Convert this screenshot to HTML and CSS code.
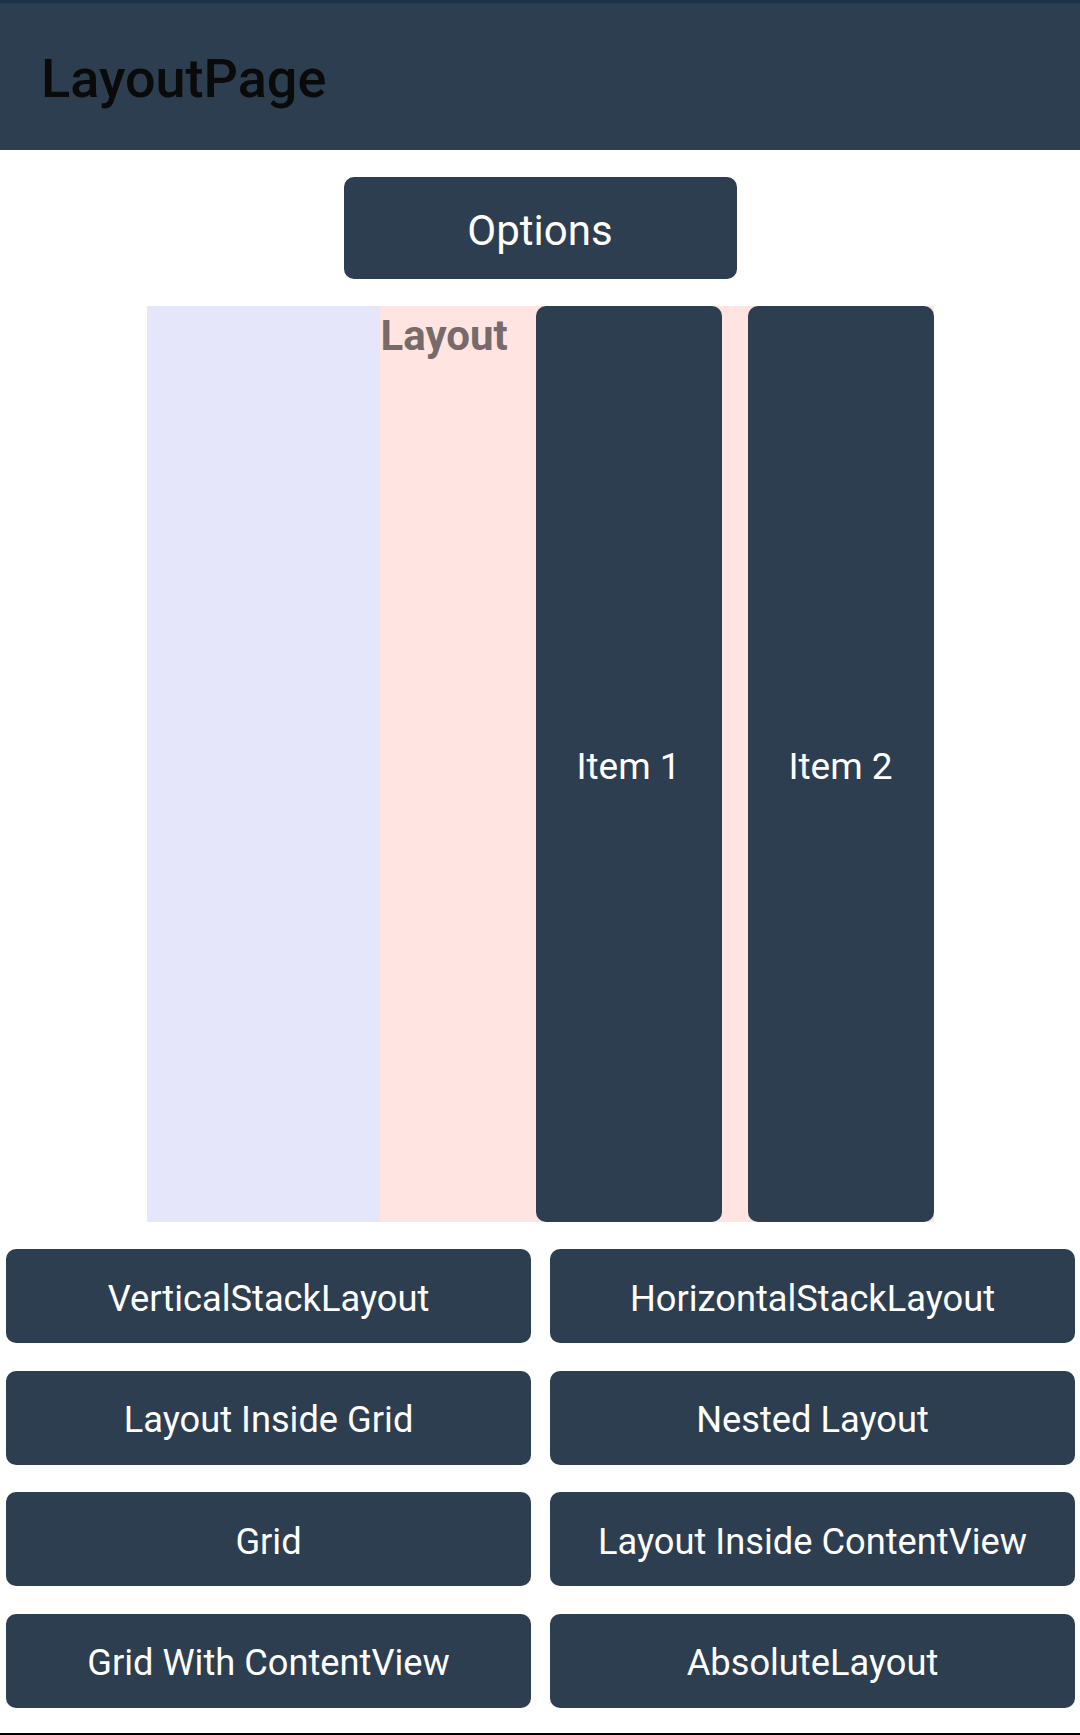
FILE: index.html
```html
<!DOCTYPE html>
<html lang="en">
<head>
  <meta charset="UTF-8" />
  <title>LayoutPage</title>
  <link rel="stylesheet" href="styles.css">
</head>
<body>

  <header class="top-bar">
    <h1 class="page-title">LayoutPage</h1>
  </header>

  <main class="content">

    <button class="options-button">Options</button>

    <div class="layout-demo">
      <div class="column-side"></div>
      <div class="column-main">
        <span class="layout-label">Layout</span>
        <div class="item-box">Item 1</div>
        <div class="item-box">Item 2</div>
      </div>
    </div>

    <div class="nav-grid">
      <button class="nav-button">VerticalStackLayout</button>
      <button class="nav-button">HorizontalStackLayout</button>
      <button class="nav-button">Layout Inside Grid</button>
      <button class="nav-button">Nested Layout</button>
      <button class="nav-button">Grid</button>
      <button class="nav-button">Layout Inside ContentView</button>
      <button class="nav-button">Grid With ContentView</button>
      <button class="nav-button">AbsoluteLayout</button>
    </div>

    <div class="bottom-line"></div>
  </main>

</body>
</html>
```

FILE: styles.css
```css
body {
  margin: 0;
  padding: 0;
  font-family: Roboto, "Liberation Sans", Arial, sans-serif;
  background: #ffffff;
}

.top-bar {
  height: 147px;
  border-top: 3px solid #1e3247;
  background: #2c3e50;
  display: flex;
  align-items: center;
  padding-left: 41px;
}

.page-title {
  margin: 0;
  font-size: 54px;
  font-weight: 500;
  color: #0a0a0a;
  padding-top: 4px;
}

.content {
  display: flex;
  flex-direction: column;
  align-items: center;
}

.options-button {
  margin-top: 27px;
  width: 393px;
  height: 102px;
  border: none;
  border-radius: 10px;
  background: #2c3e50;
  color: #ffffff;
  font-family: inherit;
  font-size: 42px;
  padding: 4px 0 0;
}

.layout-demo {
  margin-top: 27px;
  width: 787px;
  height: 916px;
  display: flex;
}

.column-side {
  width: 234px;
  background: #e6e6fa;
}

.column-main {
  flex: 1;
  background: #ffe4e1;
  display: flex;
  gap: 26px;
}

.layout-label {
  width: 129px;
  flex: none;
  font-size: 42px;
  font-weight: 700;
  color: #766b6a;
  padding-left: 1px;
  margin-top: 5px;
}

.item-box {
  width: 186px;
  flex: none;
  background: #2c3e50;
  border-radius: 10px;
  color: #ffffff;
  font-size: 37px;
  padding-top: 4px;
  display: flex;
  align-items: center;
  justify-content: center;
}

.nav-grid {
  margin-top: 27px;
  align-self: stretch;
  padding: 0 5px 0 6px;
  display: grid;
  grid-template-columns: 1fr 1fr;
  column-gap: 19px;
  row-gap: 27.5px;
}

.nav-button {
  height: 94px;
  border: none;
  border-radius: 10px;
  background: #2c3e50;
  color: #ffffff;
  font-family: inherit;
  font-size: 36.25px;
  padding: 4px 0 0;
}

.bottom-line {
  align-self: stretch;
  margin-top: 25.5px;
  height: 2px;
  background: #000000;
}
```
